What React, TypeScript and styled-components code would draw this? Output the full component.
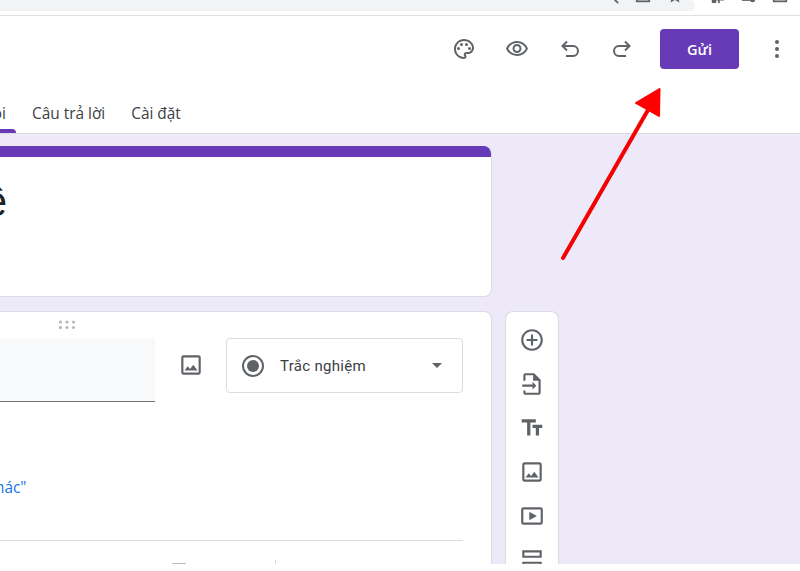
import React from "react";
import styled, { createGlobalStyle } from "styled-components";

const GlobalStyle = createGlobalStyle`
  html, body {
    margin: 0;
    padding: 0;
    background: #fff;
  }
`;

const Page = styled.div`
  position: relative;
  width: 800px;
  height: 571px;
  overflow: hidden;
  background: #fff;
  font-family: Roboto, "Liberation Sans", sans-serif;
`;

const BrowserBar = styled.div`
  display: flex;
  height: 15px;
  border-bottom: 1px solid #dedfe0;
  overflow: hidden;
`;

const AddressPill = styled.div`
  display: flex;
  justify-content: flex-end;
  gap: 16px;
  width: 695px;
  height: 11px;
  padding-right: 12px;
  box-sizing: border-box;
  background: #f1f3f4;
  border-radius: 0 12px 12px 0;
  overflow: hidden;
`;

const BrowserTools = styled.div`
  display: flex;
  flex: 1;
  justify-content: space-between;
  padding: 0 12px 0 15px;
  height: 11px;
  overflow: hidden;
`;

const CutIcon = styled.svg<{ $solid?: boolean }>`
  width: 16px;
  height: 16px;
  margin-top: -12px;
  fill: ${(p) => (p.$solid ? "#5f6368" : "none")};
  stroke: ${(p) => (p.$solid ? "none" : "#5f6368")};
  stroke-width: 2;
`;

const Header = styled.header`
  height: 117px;
  border-bottom: 1px solid #dadce0;
  display: flex;
  flex-direction: column;
`;

const Toolbar = styled.div`
  display: flex;
  align-items: center;
  justify-content: flex-end;
  height: 40px;
  margin-top: 13px;
  padding-right: 11px;
`;

const ToolIcon = styled.svg<{ $gap?: number }>`
  width: 24px;
  height: 24px;
  fill: #5f6368;
  margin-right: ${(p) => p.$gap ?? 29}px;
  flex-shrink: 0;
`;

const SendButton = styled.button`
  width: 79px;
  height: 40px;
  margin: 0 26px 0 0;
  padding: 0;
  border: none;
  border-radius: 4px;
  background: #673ab7;
  color: #fff;
  font-family: "Open Sans", Roboto, sans-serif;
  font-size: 14.5px;
  font-weight: 600;
`;

const Tabs = styled.nav`
  display: flex;
  align-items: flex-start;
  gap: 26px;
  height: 64px;
  overflow: hidden;
`;

const Tab = styled.div`
  height: 40px;
  margin-top: 24px;
  padding-top: 11px;
  box-sizing: border-box;
  font-family: "Open Sans", Roboto, sans-serif;
  font-size: 15.4px;
  line-height: 20px;
  color: #3c4043;
  white-space: nowrap;
`;

const ActiveTab = styled(Tab)`
  position: relative;
  display: flex;
  justify-content: flex-end;
  width: 16px;
  margin-right: -10px;
  padding-right: 10px;
  overflow: hidden;

  &::after {
    content: "";
    position: absolute;
    left: 0;
    right: 0;
    bottom: 0;
    height: 4px;
    background: #673ab7;
    border-radius: 0 4px 0 0;
  }
`;

const ActiveLabel = styled.span`
  flex-shrink: 0;
`;

const Main = styled.main`
  display: grid;
  grid-template-columns: 492px 54px;
  grid-template-rows: 151px 1fr;
  column-gap: 13px;
  row-gap: 14px;
  height: 430px;
  padding-top: 12px;
  box-sizing: border-box;
  background: #ede9f8;
  overflow: hidden;
`;

const TitleCard = styled.section`
  grid-column: 1;
  box-sizing: border-box;
  background: #fff;
  border: 1px solid #dadce0;
  border-top: none;
  border-left: none;
  border-radius: 0 8px 8px 0;
  overflow: hidden;
`;

const TitleBand = styled.div`
  height: 11px;
  background: #673ab7;
`;

const TitleText = styled.div`
  display: flex;
  justify-content: flex-end;
  width: 7px;
  margin-top: 20px;
  overflow: hidden;
  font-family: "Liberation Sans", Arial, sans-serif;
  font-size: 42px;
  line-height: 50px;
  color: #202124;
`;

const TitleLabel = styled.span`
  flex-shrink: 0;
`;

const QuestionCard = styled.section`
  grid-column: 1;
  grid-row: 2;
  display: flex;
  flex-direction: column;
  box-sizing: border-box;
  padding-right: 28px;
  background: #fff;
  border: 1px solid #dadce0;
  border-left: none;
  border-bottom: none;
  border-radius: 0 8px 0 0;
`;

const Grip = styled.svg`
  width: 18px;
  height: 10px;
  margin: 8px 0 8px 59px;
  fill: #b6b8bb;
  flex-shrink: 0;
`;

const QuestionRow = styled.div`
  display: flex;
  align-items: flex-start;
`;

const QuestionInput = styled.div`
  width: 155px;
  height: 64px;
  box-sizing: border-box;
  background: #f8f9fa;
  border-bottom: 1px solid #70757a;
  flex-shrink: 0;
`;

const ImageSlot = styled.div`
  display: flex;
  justify-content: center;
  width: 71px;
  padding-top: 14px;
  flex-shrink: 0;
`;

const TypeSelect = styled.div`
  display: flex;
  align-items: center;
  width: 237px;
  height: 55px;
  box-sizing: border-box;
  padding: 0 15px;
  border: 1px solid #dadce0;
  border-radius: 4px;
  color: #3c4043;
  font-size: 15px;
  letter-spacing: 0.3px;
`;

const RadioOuter = styled.span`
  display: flex;
  align-items: center;
  justify-content: center;
  width: 22px;
  height: 22px;
  box-sizing: border-box;
  border: 2px solid #5f6368;
  border-radius: 50%;
  margin-right: 16px;
`;

const RadioDot = styled.span`
  width: 12px;
  height: 12px;
  border-radius: 50%;
  background: #5f6368;
`;

const SelectLabel = styled.span`
  flex: 1;
`;

const Caret = styled.span`
  width: 0;
  height: 0;
  margin-right: 5px;
  border-left: 5px solid transparent;
  border-right: 5px solid transparent;
  border-top: 5px solid #5f6368;
`;

const OtherLink = styled.div`
  margin: 76px 0 0 -5px;
  height: 20px;
  font-family: "Open Sans", Roboto, sans-serif;
  font-size: 15.4px;
  line-height: 20px;
  color: #1a73e8;
`;

const Divider = styled.div`
  height: 1px;
  margin-top: 42px;
  background: #dadce0;
`;

const CardFooter = styled.div`
  display: flex;
  align-items: flex-start;
  height: 40px;
  margin-top: 19px;
`;

const FooterCopy = styled.div`
  width: 14px;
  height: 3px;
  margin: 3px 0 0 172px;
  border-top: 1px solid #b8babd;
`;

const FooterRule = styled.div`
  width: 1px;
  height: 24px;
  margin-left: 89px;
  background: #dadce0;
`;

const SideBar = styled.aside`
  grid-column: 2;
  grid-row: 2;
  display: flex;
  flex-direction: column;
  align-items: center;
  gap: 18px;
  padding-top: 15px;
  background: #fff;
  border: 1px solid #dadce0;
  border-bottom: none;
  border-radius: 8px 8px 0 0;
  box-sizing: border-box;
`;

const SideIcon = styled.svg`
  width: 26px;
  height: 26px;
  fill: #5f6368;
  flex-shrink: 0;
`;

const ArrowOverlay = styled.svg`
  position: absolute;
  left: 0;
  top: 0;
  pointer-events: none;
`;

const imagePath =
  "M19 5v14H5V5h14m0-2H5c-1.1 0-2 .9-2 2v14c0 1.1.9 2 2 2h14c1.1 0 2-.9 2-2V5c0-1.1-.9-2-2-2zm-4.86 8.86l-3 3.87L9 13.14 6 17h12l-3.86-5.14z";

const App: React.FC = () => {
  return (
    <Page>
      <GlobalStyle />
      <BrowserBar>
        <AddressPill>
          <CutIcon viewBox="0 0 18 18">
            <circle cx="7" cy="7" r="5" />
            <path d="M11 11l6 6" />
          </CutIcon>
          <CutIcon viewBox="0 0 18 18">
            <rect x="2" y="2" width="14" height="13" />
          </CutIcon>
          <CutIcon viewBox="0 0 18 18" $solid>
            <path d="M9 1l2.4 5.2 5.6.6-4.2 3.8 1.2 5.600L9 13.400 4 16.200l1.200-5.600L1 6.800l5.600-.6z" />
          </CutIcon>
        </AddressPill>
        <BrowserTools>
          <CutIcon viewBox="0 0 18 18" $solid>
            <path d="M2 5h14v9h-5v3H9v-3H7v3H2z" />
          </CutIcon>
          <CutIcon viewBox="0 0 18 18" $solid>
            <circle cx="13" cy="13" r="3" />
            <path d="M1 13h10v1.500H1z" />
          </CutIcon>
          <CutIcon viewBox="0 0 18 18">
            <rect x="2" y="2" width="14" height="13" />
          </CutIcon>
        </BrowserTools>
      </BrowserBar>

      <Header>
        <Toolbar>
          <ToolIcon viewBox="0 0 24 24">
            <path d="M12 22C6.490 22 2 17.510 2 12S6.490 2 12 2s10 4.040 10 9c0 3.310-2.690 6-6 6h-1.770c-.28 0-.5.22-.5.5 0 .12.05.23.13.33.41.47.64 1.060.64 1.670 0 1.380-1.120 2.500-2.500 2.500zm0-18c-4.410 0-8 3.590-8 8s3.590 8 8 8c.28 0 .5-.22.5-.5 0-.16-.08-.28-.14-.35-.41-.46-.63-1.050-.63-1.650 0-1.380 1.120-2.500 2.500-2.500H16c2.210 0 4-1.790 4-4 0-3.860-3.590-7-8-7z" />
            <circle cx="6.500" cy="11.500" r="1.500" />
            <circle cx="9.500" cy="7.500" r="1.500" />
            <circle cx="14.500" cy="7.500" r="1.500" />
            <circle cx="17.500" cy="11.500" r="1.500" />
          </ToolIcon>
          <ToolIcon viewBox="0 0 24 24">
            <path d="M12 6c3.790 0 7.170 2.130 8.820 5.500C19.170 14.870 15.790 17 12 17s-7.170-2.130-8.820-5.500C4.830 8.130 8.210 6 12 6m0-2C7 4 2.730 7.110 1 11.500 2.730 15.890 7 19 12 19s9.270-3.110 11-7.500C21.270 7.110 17 4 12 4zm0 5c1.380 0 2.500 1.120 2.500 2.500S13.380 14 12 14s-2.500-1.120-2.500-2.500S10.620 9 12 9m0-2c-2.480 0-4.500 2.020-4.500 4.500S9.520 16 12 16s4.500-2.020 4.500-4.500S14.480 7 12 7z" />
          </ToolIcon>
          <ToolIcon viewBox="0 0 24 24" $gap={28}>
            <path
              d="M9 4.500L4.500 9 9 13.500M5 9h10a5 5 0 0 1 0 10H8"
              fill="none"
              stroke="#5f6368"
              strokeWidth="2"
            />
          </ToolIcon>
          <ToolIcon viewBox="0 0 24 24" $gap={26}>
            <path
              d="M15 4.500L19.500 9 15 13.500M19 9H9a5 5 0 0 0 0 10h7"
              fill="none"
              stroke="#5f6368"
              strokeWidth="2"
            />
          </ToolIcon>
          <SendButton>Gửi</SendButton>
          <ToolIcon viewBox="0 0 24 24" $gap={0}>
            <circle cx="12" cy="5" r="2" />
            <circle cx="12" cy="12" r="2" />
            <circle cx="12" cy="19" r="2" />
          </ToolIcon>
        </Toolbar>
        <Tabs>
          <ActiveTab>
            <ActiveLabel>Câu hỏi</ActiveLabel>
          </ActiveTab>
          <Tab>Câu trả lời</Tab>
          <Tab>Cài đặt</Tab>
        </Tabs>
      </Header>

      <Main>
        <TitleCard>
          <TitleBand />
          <TitleText>
            <TitleLabel>đề</TitleLabel>
          </TitleText>
        </TitleCard>

        <QuestionCard>
          <Grip viewBox="0 0 18 10">
            {[1.5, 8, 14.5].map((cx) =>
              [2, 7.5].map((cy) => <circle key={`${cx}-${cy}`} cx={cx} cy={cy} r="1.6" />)
            )}
          </Grip>
          <QuestionRow>
            <QuestionInput />
            <ImageSlot>
              <SideIcon viewBox="0 0 24 24">
                <path d={imagePath} />
              </SideIcon>
            </ImageSlot>
            <TypeSelect>
              <RadioOuter>
                <RadioDot />
              </RadioOuter>
              <SelectLabel>Trắc nghiệm</SelectLabel>
              <Caret />
            </TypeSelect>
          </QuestionRow>
          <OtherLink>hác"</OtherLink>
          <Divider />
          <CardFooter>
            <FooterCopy />
            <FooterRule />
          </CardFooter>
        </QuestionCard>

        <SideBar>
          <SideIcon viewBox="0 0 24 24">
            <path d="M13 7h-2v4H7v2h4v4h2v-4h4v-2h-4V7zm-1-5C6.480 2 2 6.480 2 12s4.480 10 10 10 10-4.480 10-10S17.520 2 12 2zm0 18c-4.410 0-8-3.590-8-8s3.590-8 8-8 8 3.590 8 8-3.590 8-8 8z" />
          </SideIcon>
          <SideIcon viewBox="0 0 24 24">
            <path d="M4 9V4a2 2 0 0 1 2-2h8l6 6v12a2 2 0 0 1-2 2H6a2 2 0 0 1-2-2v-2h2v2h12V9h-5V4H6v5H4z" />
            <path d="M3 12.500h9.500V10l3.500 3.500-3.500 3.500v-2.500H3v-2z" />
          </SideIcon>
          <SideIcon viewBox="0 0 24 24">
            <path d="M2.500 4v3h5v12h3V7h5V4h-13zm19 5h-9v3h3v7h3v-7h3V9z" />
          </SideIcon>
          <SideIcon viewBox="0 0 24 24">
            <path d={imagePath} />
          </SideIcon>
          <SideIcon viewBox="0 0 24 24">
            <path d="M20 4H4c-1.100 0-2 .9-2 2v12c0 1.100.9 2 2 2h16c1.100 0 2-.9 2-2V6c0-1.100-.9-2-2-2zm0 14H4V6h16v12zM9.500 8v8l7-4z" />
          </SideIcon>
          <SideIcon viewBox="0 0 24 24">
            <path d="M3 3h18v7H3zm2 2v3h14V5H5zM3 13.500h18V21H3zm2 2V19h14v-3.500H5z" />
          </SideIcon>
        </SideBar>
      </Main>

      <ArrowOverlay width="800" height="571" viewBox="0 0 800 571">
        <path d="M563 258L648 110" stroke="#f60000" strokeWidth="4" strokeLinecap="round" fill="none" />
        <path
          d="M659.500 89L636 103L659 116Z"
          fill="#fe0000"
          stroke="#fe0000"
          strokeWidth="2"
          strokeLinejoin="round"
        />
      </ArrowOverlay>
    </Page>
  );
};

export default App;
